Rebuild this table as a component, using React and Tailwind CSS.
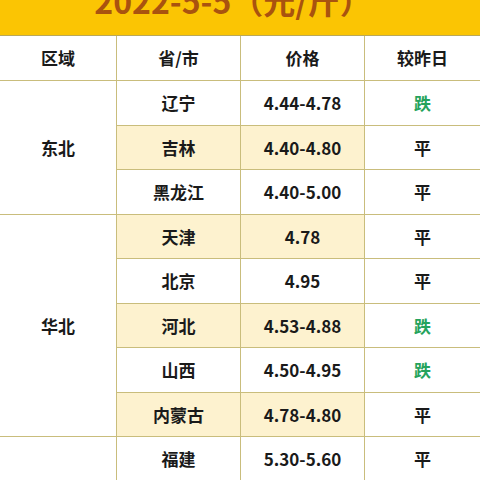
const rows = [
  { region: '东北', span: 3 },
  { prov: '辽宁', price: '4.44-4.78', cmp: '跌', hl: false },
  { prov: '吉林', price: '4.40-4.80', cmp: '平', hl: true },
  { prov: '黑龙江', price: '4.40-5.00', cmp: '平', hl: false },
];

const north = [
  { prov: '天津', price: '4.78', cmp: '平', hl: true },
  { prov: '北京', price: '4.95', cmp: '平', hl: false },
  { prov: '河北', price: '4.53-4.88', cmp: '跌', hl: true },
  { prov: '山西', price: '4.50-4.95', cmp: '跌', hl: false },
  { prov: '内蒙古', price: '4.78-4.80', cmp: '平', hl: true },
];

const northeast = rows.slice(1);
const east = [{ prov: '福建', price: '5.30-5.60', cmp: '平', hl: false }];

function Row({ r }) {
  const bg = r.hl ? 'bg-[#fdf2cf]' : 'bg-white';
  return (
    <>
      <div className={`flex items-center justify-center border-l border-b border-[#c9bd7c] ${bg}`}>{r.prov}</div>
      <div className={`flex items-center justify-center border-l border-b border-[#c9bd7c] ${bg}`}>{r.price}</div>
      <div className={`flex items-center justify-center border-l border-b border-[#c9bd7c] bg-white ${r.cmp === '跌' ? 'text-[#25a35c]' : ''}`}>
        {r.cmp}
      </div>
    </>
  );
}

function App() {
  return (
    <div
      className="w-[480px] h-[480px] overflow-hidden bg-white text-[#1a1a1a] font-bold"
      style={{ fontFamily: '"Noto Sans CJK SC", "Noto Sans", sans-serif' }}
    >
      <div className="h-[36px] bg-[#fbc503] border-b border-[#b9a85a] overflow-hidden flex justify-center">
        <div className="text-[32px] leading-[32px] mt-[-16px] text-[#a9530f] pr-[14px]">2022-5-5（元/斤）</div>
      </div>
      <div className="grid grid-cols-[116px_124px_124px_116px] grid-rows-[45px_repeat(10,44.5px)] text-[17px]">
        <div className="flex items-center justify-center border-b border-[#c9bd7c]">区域</div>
        <div className="flex items-center justify-center border-l border-b border-[#c9bd7c]">省/市</div>
        <div className="flex items-center justify-center border-l border-b border-[#c9bd7c]">价格</div>
        <div className="flex items-center justify-center border-l border-b border-[#c9bd7c]">较昨日</div>

        <div className="row-span-3 flex items-center justify-center border-b border-[#c9bd7c]">东北</div>
        {northeast.map((r, i) => <Row key={i} r={r} />)}

        <div className="row-span-5 flex items-center justify-center border-b border-[#c9bd7c]">华北</div>
        {north.map((r, i) => <Row key={i} r={r} />)}

        <div className="row-span-2 flex items-center justify-center border-b border-[#c9bd7c]"></div>
        {east.map((r, i) => <Row key={i} r={r} />)}
      </div>
    </div>
  );
}

export default App;
